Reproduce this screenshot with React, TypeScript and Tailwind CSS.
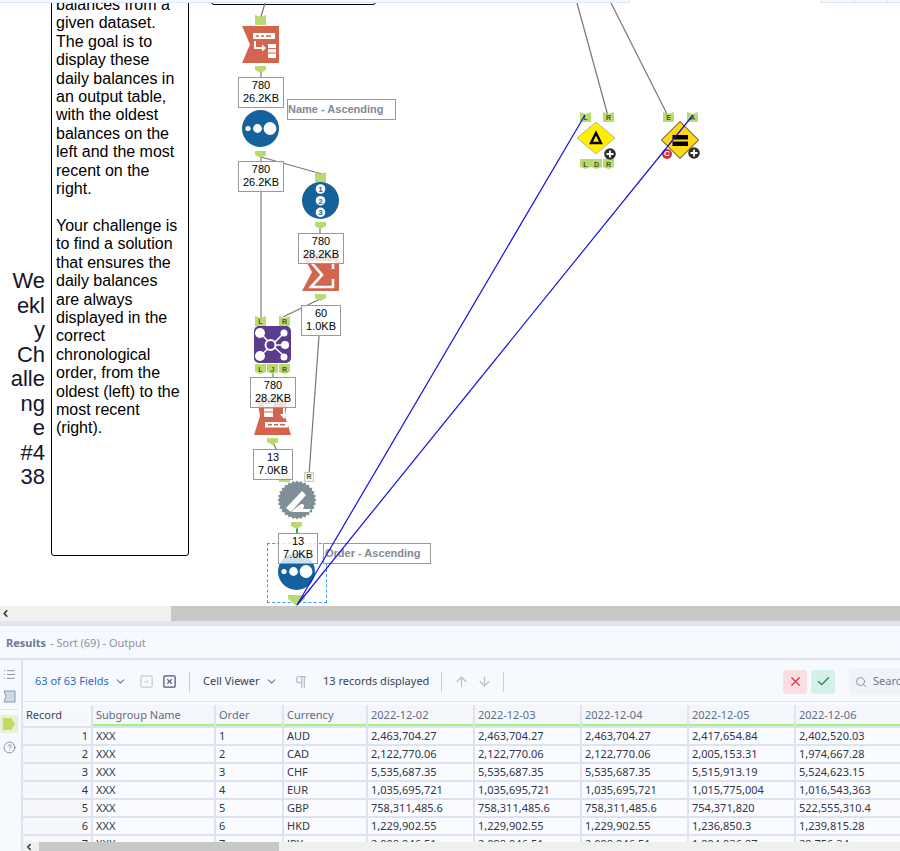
import { ArrowDown, ArrowUp, Check, ChevronDown, ChevronLeft, CircleHelp, List, Pilcrow, Search, SquareCheck, SquareX, X } from "lucide-react";

const rows = [
	["1", "XXX", "1", "AUD", "2,463,704.27", "2,463,704.27", "2,463,704.27", "2,417,654.84", "2,402,520.03"],
	["2", "XXX", "2", "CAD", "2,122,770.06", "2,122,770.06", "2,122,770.06", "2,005,153.31", "1,974,667.28"],
	["3", "XXX", "3", "CHF", "5,535,687.35", "5,535,687.35", "5,535,687.35", "5,515,913.19", "5,524,623.15"],
	["4", "XXX", "4", "EUR", "1,035,695,721", "1,035,695,721", "1,035,695,721", "1,015,775,004", "1,016,543,363"],
	["5", "XXX", "5", "GBP", "758,311,485.6", "758,311,485.6", "758,311,485.6", "754,371,820", "522,555,310.4"],
	["6", "XXX", "6", "HKD", "1,229,902.55", "1,229,902.55", "1,229,902.55", "1,236,850.3", "1,239,815.28"],
	["7", "XXX", "7", "JPY", "2,098,946.51", "2,098,946.51", "2,098,946.51", "1,994,936.87", "28,756.34"],
];

const headers = ["Subgroup Name", "Order", "Currency", "2022-12-02", "2022-12-03", "2022-12-04", "2022-12-05", "2022-12-06"];

const gearPoints = Array.from({ length: 56 }, (_, i) => {
	const r = i % 2 === 0 ? 19.5 : 17.5;
	const a = (i / 56) * Math.PI * 2;
	return `${20 + r * Math.cos(a)},${20 + r * Math.sin(a)}`;
}).join(" ");

// input anchors have a notch on top, outputs come to a point at the bottom
function Anchor({ className, letter, output }: { className: string; letter?: string; output?: boolean }) {
	const outPoints = letter ? "0,0 11,0 11,8 5.5,10 0,8" : "0,0 11,0 11,4 5.5,7 0,4";
	return (
		<svg viewBox="0 0 11 10" className={`absolute h-[10px] w-[11px] ${className}`}>
			<polygon points={output ? outPoints : "0,0 5.5,2 11,0 11,10 0,10"} fill="#bad96f" />
			{letter && (
				<text x="5.5" y="7.5" textAnchor="middle" fontSize="7" fontWeight="700" fill="#3f5a2a" fontFamily="Liberation Sans, sans-serif">
					{letter}
				</text>
			)}
		</svg>
	);
}

function StatBox({ className, top, bottom }: { className: string; top: string; bottom: string }) {
	return (
		<div className={`absolute z-20 flex h-[31px] flex-col items-center justify-center border border-[#9a9a9a] bg-white/80 pb-[2px] text-[11px] leading-[13px] text-black ${className}`}>
			<span>{top}</span>
			<span>{bottom}</span>
		</div>
	);
}

function SortIcon({ className }: { className: string }) {
	return (
		<svg viewBox="0 0 37 37" className={`absolute h-[37px] w-[37px] ${className}`}>
			<circle cx="18.5" cy="18.5" r="18.5" fill="#15619b" />
			<circle cx="6" cy="18.5" r="2.6" fill="#fff" />
			<circle cx="15.5" cy="18.5" r="4.4" fill="#fff" />
			<circle cx="28" cy="18.5" r="6.4" fill="#fff" />
		</svg>
	);
}

function PlusBadge({ className }: { className: string }) {
	return (
		<svg viewBox="0 0 12 12" className={`absolute z-20 h-[12px] w-[12px] ${className}`}>
			<circle cx="6" cy="6" r="5.8" fill="#2f2f2f" />
			<path d="M6 2.5v7M2.5 6h7" stroke="#fff" strokeWidth="1.8" />
		</svg>
	);
}

function Canvas() {
	return (
		<div className="relative h-[606px] overflow-hidden bg-white font-['Liberation_Sans',sans-serif]">
			{/* strip of the pane above */}
			<div className="absolute left-0 top-0 z-30 h-[3px] w-[630px] border-b border-r border-[#dce5f2] bg-[#f6f9fd]" />
			<div className="absolute left-[821px] top-0 z-30 flex h-[3px] w-[79px] border-b border-l border-[#dce5f2] bg-[#f6f9fd]">
				<div className="w-[33px] border-r border-[#dce5f2]" />
				<div className="w-[33px] border-r border-[#dce5f2]" />
			</div>

			{/* comment boxes */}
			<div className="absolute left-0 top-[269px] w-[45px] text-right text-[22px] leading-[24.5px] text-[#15152a]">
				We<br />ekl<br />y<br />Ch<br />alle<br />ng<br />e<br />#4<br />38
			</div>
			<div className="absolute left-[51px] top-[-6px] h-[562px] w-[138px] rounded-b-[3px] border border-black bg-white pl-[4px] pt-[1px] text-[16px] leading-[18.4px] text-black">
				balances from a<br />given dataset.<br />The goal is to<br />display these<br />daily balances in<br />an output table,<br />with the oldest<br />balances on the<br />left and the most<br />recent on the<br />right.<br /><br />Your challenge is<br />to find a solution<br />that ensures the<br />daily balances<br />are always<br />displayed in the<br />correct<br />chronological<br />order, from the<br />oldest (left) to the<br />most recent<br />(right).
			</div>
			<div className="absolute left-[211px] top-[-6px] h-[11px] w-[165px] rounded-b-[3px] border border-black bg-white" />

			{/* grey connections */}
			<svg viewBox="0 0 900 606" className="absolute left-0 top-0 h-[606px] w-[900px]" fill="none" stroke="#777" strokeWidth="1.2">
				<path d="M265 3 260 20" />
				<path d="M261 70V78" />
				<path d="M261 154V320" stroke="#999" strokeWidth="1.5" />
				<path d="M261 157 322 174" />
				<path d="M320 228V235" />
				<path d="M320 299 283 317" />
				<path d="M319 336 309 475" />
				<path d="M273 372V378" />
				<path d="M273 443 278 452" />
				<path d="M577 3 608 116" />
				<path d="M611 3 668 116" />
				<path d="M297 527V534" stroke="#36a852" strokeWidth="2" />
			</svg>

			{/* top column of tools */}
			<Anchor className="left-[255px] top-[15px]" />
			<svg viewBox="0 0 37 37" className="absolute left-[242px] top-[26px] h-[37px] w-[37px]">
				<polygon points="0,0 37,0 37,37 0,37 8,18.5" fill="#d3654e" />
				<rect x="11" y="7" width="22" height="6" rx="1" fill="#fff" />
				<path d="M14 10h3M19 10h3M24 10h5" stroke="#d3654e" strokeWidth="1.5" />
				<path d="M13 15v7h9" fill="none" stroke="#fff" strokeWidth="2" />
				<path d="M20 18.5 24 22 20 25.5z" fill="#fff" />
				<rect x="26" y="18" width="8" height="14" fill="#fff" />
				<path d="M26 22.5h8M26 27h8" stroke="#d3654e" strokeWidth="1.2" />
			</svg>
			<Anchor className="left-[255px] top-[66px]" output />
			<StatBox className="left-[238px] top-[77px] w-[46px]" top="780" bottom="26.2KB" />
			<div className="absolute left-[287px] top-[99px] z-20 flex h-[21px] w-[109px] items-center border border-[#9a9a9a] bg-white text-[11px] font-bold text-[#808a98]">
				Name - Ascending
			</div>
			<SortIcon className="left-[242px] top-[110px]" />
			<Anchor className="left-[255px] top-[151px]" output />
			<StatBox className="left-[238px] top-[161px] w-[46px]" top="780" bottom="26.2KB" />

			{/* record id branch */}
			<Anchor className="left-[315px] top-[172px]" />
			<svg viewBox="0 0 37 37" className="absolute left-[302px] top-[182px] h-[37px] w-[37px]">
				<circle cx="18.5" cy="18.5" r="18.5" fill="#15619b" />
				{["1", "2", "3"].map((n, i) => (
					<g key={n}>
						<circle cx="18.5" cy={7 + i * 11.7} r="4.8" fill="#fff" />
						<text x="18.5" y={10 + i * 11.7} textAnchor="middle" fontSize="8" fontWeight="700" fill="#15619b" fontFamily="Liberation Sans, sans-serif">
							{n}
						</text>
					</g>
				))}
			</svg>
			<Anchor className="left-[315px] top-[222px]" output />
			<StatBox className="left-[298px] top-[233px] w-[46px]" top="780" bottom="28.2KB" />
			<svg viewBox="0 0 37 37" className="absolute left-[302px] top-[254px] z-10 h-[37px] w-[37px]">
				<polygon points="0,37 10,18 0,0 37,0 37,37" fill="#d3654e" />
				<path d="M31 15V8H9l11 13L9 33h22v-8" fill="none" stroke="#fff" strokeWidth="2.6" />
			</svg>
			<Anchor className="left-[315px] top-[294px]" output />
			<StatBox className="left-[301px] top-[305px] w-[40px]" top="60" bottom="1.0KB" />

			{/* join */}
			<Anchor className="left-[255px] top-[316px]" letter="L" />
			<Anchor className="left-[279px] top-[316px]" letter="R" />
			<svg viewBox="0 0 37 37" className="absolute left-[254px] top-[326px] h-[37px] w-[37px]">
				<rect width="37" height="37" rx="5" fill="#5b3c8d" />
				<g stroke="#fff" strokeWidth="1.5">
					<path d="M6 7 17 18M30 7 19 18M30 19H19M6 30 17 20M30 30 19 20" />
				</g>
				<circle cx="6" cy="7" r="5" fill="#fff" />
				<circle cx="30" cy="7" r="3.5" fill="#fff" />
				<circle cx="31" cy="19" r="4" fill="#fff" />
				<circle cx="6" cy="30" r="5" fill="#fff" />
				<circle cx="30" cy="31" r="3.5" fill="#fff" />
				<circle cx="16.5" cy="19" r="5" fill="#5b3c8d" stroke="#fff" strokeWidth="2" />
			</svg>
			<Anchor className="left-[255px] top-[364px]" letter="L" output />
			<Anchor className="left-[267px] top-[364px]" letter="J" output />
			<Anchor className="left-[279px] top-[364px]" letter="R" output />
			<StatBox className="left-[250px] top-[377px] w-[46px]" top="780" bottom="28.2KB" />
			<svg viewBox="0 0 37 37" className="absolute left-[254px] top-[398px] h-[37px] w-[37px]">
				<polygon points="3,0 34,0 31,18 37,37 0,37 6,18" fill="#d3654e" />
				<rect x="10" y="6" width="9" height="13" fill="#fff" />
				<path d="M10 10h9M10 14h9" stroke="#d3654e" />
				<path d="M30 9v8" stroke="#fff" strokeWidth="2" />
				<path d="M26 16h8l-4 5z" fill="#fff" />
				<rect x="11" y="24" width="23" height="5.5" fill="#fff" />
				<path d="M14 26.7h4M20 26.7h4M26 26.7h5" stroke="#d3654e" strokeWidth="1.5" />
			</svg>
			<Anchor className="left-[267px] top-[438px]" output />
			<StatBox className="left-[253px] top-[449px] w-[40px]" top="13" bottom="7.0KB" />

			{/* formula and final sort */}
			<Anchor className="left-[279px] top-[472px]" />
			<div className="absolute left-[304px] top-[472px] z-20 flex h-[10px] w-[10px] items-center justify-center border border-[#c9c9c9] bg-[#f3f3ea] text-[7px] font-bold text-[#505a3a]">
				R
			</div>
			<svg viewBox="0 0 40 40" className="absolute left-[277px] top-[480px] h-[40px] w-[40px]">
				<polygon points={gearPoints} fill="#7f8f97" />
				<path d="M9 28 25 11l4 4-15 17z" fill="#fff" />
				<path d="M17 29c3-1 5-5 8-5 2 0 3 2 1 5h8l-2 3H15z" fill="#fff" />
			</svg>
			<Anchor className="left-[291px] top-[522px]" output />
			<div className="absolute left-[267px] top-[543px] h-[60px] w-[60px] border border-dashed border-[#3b9cf5]" />
			<SortIcon className="left-[278px] top-[553px]" />
			<StatBox className="left-[278px] top-[533px] w-[40px]" top="13" bottom="7.0KB" />
			<div className="absolute left-[323px] top-[543px] z-20 flex h-[21px] w-[108px] items-center border border-[#9a9a9a] bg-white pl-[1px] text-[11px] font-bold text-[#808a98]">
				Order - Ascending
			</div>
			<svg viewBox="0 0 17 11" className="absolute left-[288px] top-[595px] z-20 h-[11px] w-[17px]">
				<polygon points="0,0 17,0 17,4 8.5,11 0,4" fill="#bad96f" />
			</svg>

			{/* right tools */}
			<Anchor className="left-[580px] top-[112px]" letter="L" />
			<Anchor className="left-[603px] top-[112px]" letter="R" />
			<svg viewBox="0 0 40 40" className="absolute left-[576px] top-[118px] z-10 h-[40px] w-[40px]">
				<polygon points="20,4 39,20 20,36 1,20" fill="#ffee00" stroke="#b8b8a0" />
				<polygon points="20,15 25,25 15,25" fill="none" stroke="#000" strokeWidth="2.4" />
			</svg>
			<PlusBadge className="left-[604px] top-[148px]" />
			<Anchor className="left-[580px] top-[159px]" letter="L" output />
			<Anchor className="left-[591px] top-[159px]" letter="D" output />
			<Anchor className="left-[603px] top-[159px]" letter="R" output />
			<Anchor className="left-[663px] top-[112px]" letter="E" />
			<Anchor className="left-[687px] top-[112px]" letter="A" />
			<svg viewBox="0 0 40 40" className="absolute left-[660px] top-[120px] z-10 h-[40px] w-[40px]">
				<polygon points="20,1.5 38.5,20 20,38.5 1.5,20" fill="#ffd814" stroke="#333" />
				<rect x="12.5" y="15" width="15.5" height="4.5" fill="#000" />
				<rect x="12.5" y="21.5" width="15.5" height="4.5" fill="#000" />
			</svg>
			<PlusBadge className="left-[688px] top-[147px]" />
			<div className="absolute left-[662px] top-[149px] z-20 flex h-[10px] w-[10px] items-center justify-center rounded-full bg-[#d0312d] text-[8px] font-bold text-white">
				C
			</div>

			{/* browse connections drawn on top */}
			<svg viewBox="0 0 900 606" className="pointer-events-none absolute left-0 top-0 z-30 h-[606px] w-[900px]" fill="none" stroke="#1212e0" strokeWidth="1.2">
				<path d="M297 605 585 115" />
				<path d="M297 605 693 115" />
			</svg>
		</div>
	);
}

function Rail() {
	return (
		<div className="flex w-[23px] flex-none flex-col items-center border-r-2 border-[#dde5f2] bg-[#f6f9fd] pr-[3px] pt-[8px]">
			<List className="h-[13px] w-[13px] text-[#6b7a90]" strokeWidth={1.5} />
			<svg viewBox="0 0 13 13" className="mt-[9px] h-[13px] w-[13px]">
				<polygon points="1,1 12,1 12,12 1,12 3,6.5" fill="#cdd8ea" stroke="#8a98b0" />
			</svg>
			<div className="mt-[6px] h-px w-[18px] bg-[#dde5f2]" />
			<div className="mt-[5px] flex h-[18px] w-[18px] items-center justify-center rounded-[3px] bg-[#e5f1d4]">
				<svg viewBox="0 0 12 12" className="h-[12px] w-[12px]">
					<polygon points="0,0 8,0 12,6 8,12 0,12" fill="#c2db5e" />
				</svg>
			</div>
			<CircleHelp className="mt-[8px] h-[13px] w-[13px] text-[#6b7a90]" strokeWidth={1.5} />
		</div>
	);
}

function Toolbar() {
	return (
		<div className="flex h-[42px] flex-none items-center overflow-hidden whitespace-nowrap border-b border-[#dde5f2] bg-[#f6f9fd] pl-[12px] pt-[2px] text-[11px] text-[#3a4358] [&>*]:flex-none">
			<span className="w-[74px] text-[#2a6cc4]">63 of 63 Fields</span>
			<ChevronDown className="ml-[5px] h-[13px] w-[13px] text-[#6b7a90]" />
			<SquareCheck className="ml-[12px] h-[15px] w-[15px] text-[#b9bec8]" strokeWidth={1.5} />
			<SquareX className="ml-[8px] h-[15px] w-[15px] text-[#4a5570]" strokeWidth={2} />
			<div className="ml-[12px] h-[20px] w-px bg-[#c9ced8]" />
			<span className="ml-[13px] w-[57px]">Cell Viewer</span>
			<ChevronDown className="ml-[5px] h-[13px] w-[13px] text-[#6b7a90]" />
			<Pilcrow className="ml-[15px] h-[16px] w-[16px] text-[#b9bec8]" strokeWidth={2} />
			<span className="ml-[14px] w-[107px]">13 records displayed</span>
			<div className="ml-[11px] h-[20px] w-px bg-[#c9ced8]" />
			<ArrowUp className="ml-[12px] h-[15px] w-[15px] text-[#b9bec8]" />
			<ArrowDown className="ml-[8px] h-[15px] w-[15px] text-[#b9bec8]" />
			<div className="ml-[11px] h-[20px] w-px bg-[#c9ced8]" />
			<div className="ml-[279px] flex h-[24px] w-[24px] items-center justify-center rounded-[3px] bg-[#f9dfe3]">
				<X className="h-[15px] w-[15px] text-[#d8344a]" strokeWidth={2} />
			</div>
			<div className="ml-[4px] flex h-[24px] w-[24px] items-center justify-center rounded-[3px] bg-[#d5efe9]">
				<Check className="h-[15px] w-[15px] text-[#12855f]" strokeWidth={2} />
			</div>
			<div className="ml-[14px] flex h-[27px] w-[60px] items-center gap-[6px] rounded-[3px] bg-[#f0f3f8] pl-[6px] text-[#6b7a90]">
				<Search className="h-[12px] w-[12px] flex-none" strokeWidth={1.5} />
				<span>Search</span>
			</div>
		</div>
	);
}

function ResultsTable() {
	return (
		<div className="mt-[3px] min-h-0 flex-1 overflow-hidden bg-[#dde3f0]">
			<div className="grid grid-cols-[68px_121px_66px_82px_105px_105px_105px_105px_105px] auto-rows-[16px] gap-[2px] text-[11px] leading-[16px] text-[#2f3648]">
				<div className="h-[21px] bg-[#f7f8fc] pl-[3px] leading-[20px] text-[#3a4358]">Record</div>
				{headers.map((h) => (
					<div key={h} className="h-[21px] border-b-[2px] border-[#a0f57f] bg-[#f5f6fb] pl-[3px] leading-[20px] text-[#626d82]">
						{h}
					</div>
				))}
				{rows.map((row) =>
					row.map((cell, i) => (
						<div
							key={`${row[0]}-${i}`}
							className={i === 0 ? "translate-y-[5px] bg-[#f7f8fc] pr-[3px] text-right" : "translate-y-[5px] bg-[#fbfcff] pl-[3px]"}
						>
							{cell}
						</div>
					)),
				)}
			</div>
		</div>
	);
}

export default function App() {
	return (
		<div className="flex h-[851px] w-[900px] flex-col overflow-hidden bg-white">
			<Canvas />
			<div className="flex h-[15px] flex-none bg-[#c8c8c8]">
				<div className="flex w-[171px] items-center bg-[#f0f0f0]">
					<ChevronLeft className="h-[11px] w-[11px] text-[#222]" strokeWidth={3} />
				</div>
			</div>
			<div className="h-[5px] flex-none bg-[#dde5f2]" />
			<div className="flex h-[34px] flex-none items-center border-b-2 border-[#dde5f2] bg-[#f6f9fd] pl-[6px] pt-[3px] font-['Noto_Sans',sans-serif] text-[11px] text-[#8a93a3]">
				<span className="font-bold text-[#6b7a90]">Results</span>
				<span className="ml-[4px]">- Sort (69) - Output</span>
			</div>
			<div className="flex min-h-0 flex-1 bg-[#f6f9fd] font-['Noto_Sans',sans-serif]">
				<Rail />
				<div className="flex min-w-0 flex-1 flex-col">
					<Toolbar />
					<ResultsTable />
					<div className="flex h-[9px] flex-none items-center bg-[#f0f0f0]">
						<ChevronLeft className="ml-[1px] h-[10px] w-[10px] flex-none text-[#222]" strokeWidth={3} />
						<div className="ml-[5px] h-[9px] w-[240px] bg-[#c8c8c8]" />
					</div>
				</div>
			</div>
		</div>
	);
}
